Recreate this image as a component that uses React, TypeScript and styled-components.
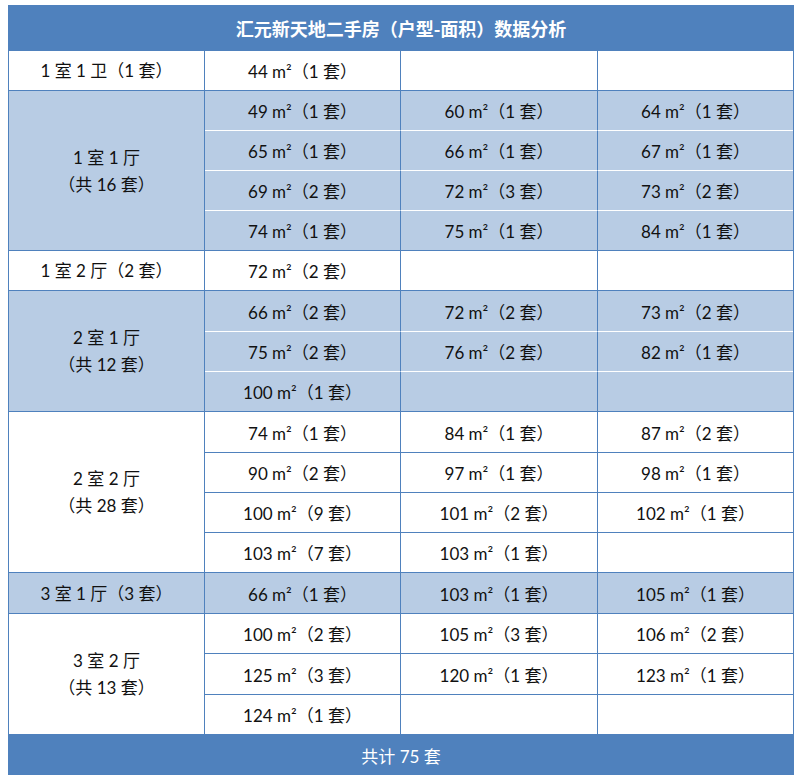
import React from 'react';
import styled, { createGlobalStyle } from 'styled-components';

const BLUE = '#4f81bd';
const BAND = '#b8cce4';

const GlobalStyle = createGlobalStyle`
  html, body {
    margin: 0;
    padding: 0;
    background: #fff;
  }
  body {
    padding: 5px 8px 0 8px;
    font-family: Lato, "Noto Sans CJK SC", sans-serif;
  }
`;

const Table = styled.table`
  width: 784px;
  border-collapse: separate;
  border-spacing: 0;
  table-layout: fixed;
  font-size: 17px;
  color: #111;
  border-left: 1px solid ${BLUE};
  border-right: 1px solid ${BLUE};
`;

const Col = styled.col<{ $w: number }>`
  width: ${(p) => p.$w}px;
`;

const TitleCell = styled.th`
  height: 46px;
  padding: 0;
  background: ${BLUE};
  color: #fff;
  font-weight: bold;
  font-size: 18px;
  font-family: "Noto Sans CJK SC", sans-serif;
  text-align: center;
  vertical-align: middle;
`;

const FootCell = styled.td`
  height: 40px;
  padding: 0;
  background: ${BLUE};
  color: #fff;
  text-align: center;
  vertical-align: middle;
`;

const Row = styled.tr<{ $h: number }>`
  height: ${(p) => p.$h}px;
`;

const LabelCell = styled.td<{ $band: boolean }>`
  padding: 0;
  background: ${(p) => (p.$band ? BAND : '#fff')};
  border-right: 1px solid ${BLUE};
  border-bottom: 1px solid ${BLUE};
  text-align: center;
  vertical-align: middle;
  line-height: 27px;
  white-space: pre-line;
`;

const DataCell = styled.td<{ $band: boolean; $last: boolean; $end?: boolean }>`
  padding: 0;
  background: ${(p) => (p.$band ? BAND : '#fff')};
  border-right: ${(p) => (p.$end ? 'none' : `1px solid ${BLUE}`)};
  border-bottom: 1px solid ${(p) => (p.$band && !p.$last ? '#fff' : BLUE)};
  text-align: center;
  vertical-align: middle;
  white-space: pre;
`;

type Group = { label: string; rows: string[][] };

const a = (size: number, n: number) => `${size} m²（${n} 套）`;

const groups: Group[] = [
  { label: '1 室 1 卫（1 套）', rows: [[a(44, 1), '', '']] },
  {
    label: '1 室 1 厅\n（共 16 套）',
    rows: [
      [a(49, 1), a(60, 1), a(64, 1)],
      [a(65, 1), a(66, 1), a(67, 1)],
      [a(69, 2), a(72, 3), a(73, 2)],
      [a(74, 1), a(75, 1), a(84, 1)],
    ],
  },
  { label: '1 室 2 厅（2 套）', rows: [[a(72, 2), '', '']] },
  {
    label: '2 室 1 厅\n（共 12 套）',
    rows: [
      [a(66, 2), a(72, 2), a(73, 2)],
      [a(75, 2), a(76, 2), a(82, 1)],
      [a(100, 1), '', ''],
    ],
  },
  {
    label: '2 室 2 厅\n（共 28 套）',
    rows: [
      [a(74, 1), a(84, 1), a(87, 2)],
      [a(90, 2), a(97, 1), a(98, 1)],
      [a(100, 9), a(101, 2), a(102, 1)],
      [a(103, 7), a(103, 1), ''],
    ],
  },
  { label: '3 室 1 厅（3 套）', rows: [[a(66, 1), a(103, 1), a(105, 1)]] },
  {
    label: '3 室 2 厅\n（共 13 套）',
    rows: [
      [a(100, 2), a(105, 3), a(106, 2)],
      [a(125, 3), a(120, 1), a(123, 1)],
      [a(124, 1), '', ''],
    ],
  },
];

// measured row pitch is a touch over 40px; a few rows take the extra pixel
const tallRows = new Set([6, 9, 13, 15]);

export default function App() {
  let rowIndex = 0;
  return (
    <>
      <GlobalStyle />
      <Table>
        <colgroup>
          <Col $w={196} />
          <Col $w={196} />
          <Col $w={197} />
          <Col $w={195} />
        </colgroup>
        <thead>
          <tr>
            <TitleCell colSpan={4}>汇元新天地二手房（户型-面积）数据分析</TitleCell>
          </tr>
        </thead>
        <tbody>
          {groups.map((g, gi) => {
            const band = gi % 2 === 1;
            return g.rows.map((r, ri) => {
              const h = tallRows.has(rowIndex) ? 41 : 40;
              rowIndex += 1;
              const last = ri === g.rows.length - 1;
              return (
                <Row key={`${gi}-${ri}`} $h={h}>
                  {ri === 0 && (
                    <LabelCell $band={band} rowSpan={g.rows.length}>
                      {g.label}
                    </LabelCell>
                  )}
                  {r.map((c, ci) => (
                    <DataCell key={ci} $band={band} $last={last} $end={ci === 2}>
                      {c}
                    </DataCell>
                  ))}
                </Row>
              );
            });
          })}
        </tbody>
        <tfoot>
          <tr>
            <FootCell colSpan={4}>共计 75 套</FootCell>
          </tr>
        </tfoot>
      </Table>
    </>
  );
}
